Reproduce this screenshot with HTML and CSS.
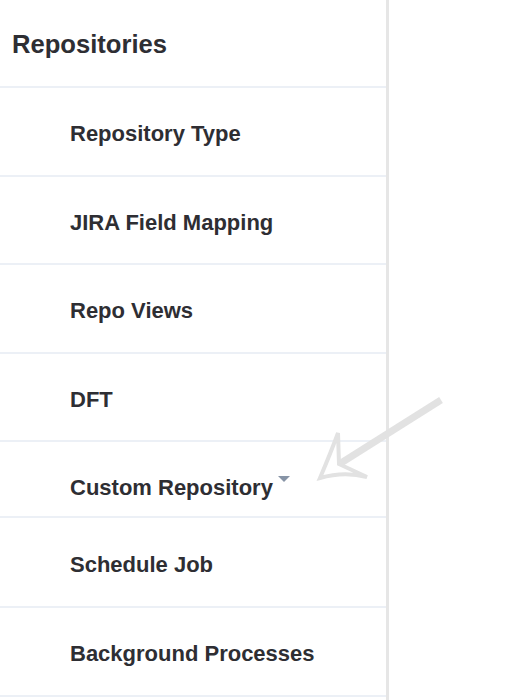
FILE: index.html
```html
<!DOCTYPE html>
<html>
<head>
<meta charset="utf-8">
<link rel="stylesheet" href="styles.css">
</head>
<body>
<div class="page">
  <nav class="sidebar">
    <div class="heading">Repositories</div>
    <ul class="menu">
      <li class="item">Repository Type</li>
      <li class="item">JIRA Field Mapping</li>
      <li class="item">Repo Views</li>
      <li class="item">DFT</li>
      <li class="item item-dropdown">Custom Repository<span class="caret"></span></li>
      <li class="item item-schedule">Schedule Job</li>
      <li class="item item-last">Background Processes</li>
    </ul>
  </nav>
  <svg class="annotation" width="507" height="700" viewBox="0 0 507 700">
    <line x1="441" y1="400" x2="341" y2="463" stroke="#e2e2e2" stroke-width="7" stroke-linecap="butt"/>
    <path d="M320 478 Q331 452 338 433 L339 464 L367 477 Q344 471 320 478 Z" fill="none" stroke="#e2e2e2" stroke-width="4" stroke-linejoin="miter"/>
  </svg>
</div>
</body>
</html>
```
FILE: styles.css
```css
html, body {
  margin: 0;
  padding: 0;
  background: #ffffff;
}

body {
  font-family: "Liberation Sans", Arial, Helvetica, sans-serif;
  color: #2e2e33;
}

.page {
  position: relative;
  width: 507px;
  height: 700px;
  overflow: hidden;
}

.sidebar {
  width: 386px;
  height: 700px;
  border-right: 3px solid #e6e6e6;
  box-sizing: content-box;
}

.heading {
  font-size: 25.6px;
  font-weight: bold;
  line-height: 28px;
  padding: 30px 0 28px 12px;
  border-bottom: 2px solid #ecf0f6;
}

.menu {
  list-style: none;
  margin: 0;
  padding: 0;
}

.item {
  font-size: 22px;
  font-weight: bold;
  line-height: 24px;
  padding: 34px 0 28.5px 70px;
  border-bottom: 2px solid #ecf0f6;
}

.item-dropdown {
  padding-bottom: 16px;
}

.item-schedule {
  padding-top: 35px;
  padding-bottom: 29px;
}

.caret {
  display: inline-block;
  width: 0;
  height: 0;
  margin-left: 5px;
  vertical-align: 13px;
  border-left: 6px solid transparent;
  border-right: 6px solid transparent;
  border-top: 6px solid #8794a6;
}

.annotation {
  position: absolute;
  left: 0;
  top: 0;
  pointer-events: none;
}
```
